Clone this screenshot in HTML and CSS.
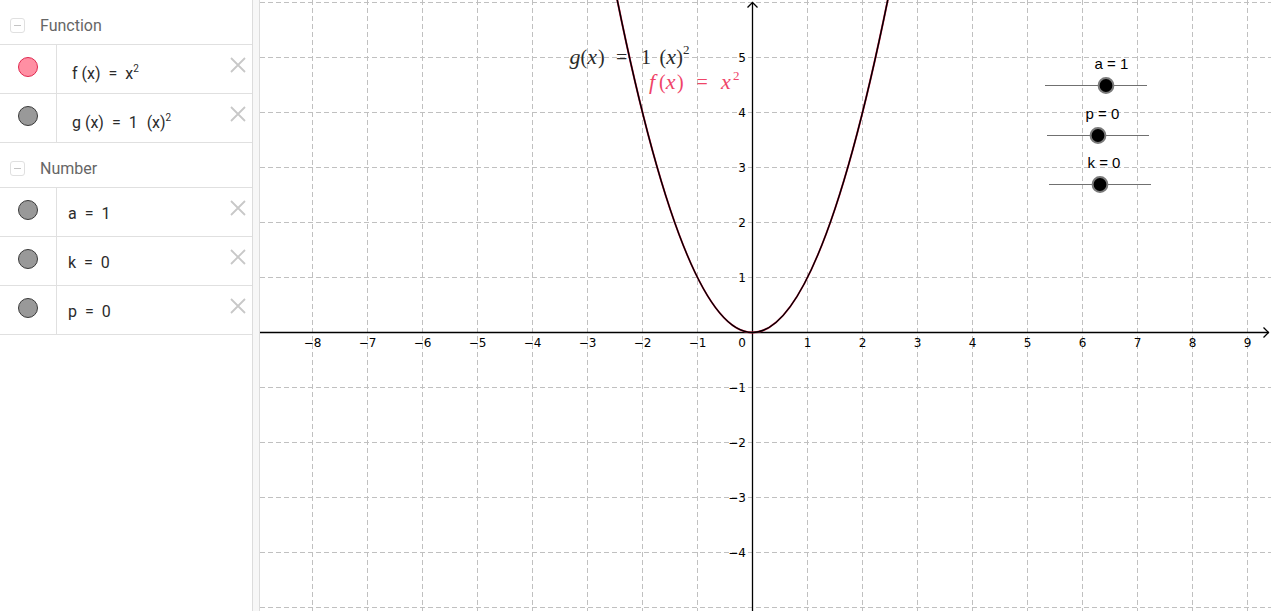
FILE: index.html
```html
<!DOCTYPE html>
<html>
<head>
<meta charset="utf-8">
<title>GeoGebra</title>
<link rel="stylesheet" href="styles.css">
</head>
<body>
<div class="app">
  <aside class="algebra">
    <div class="group-head">
      <span class="toggle"><span class="minus"></span></span>
      <span class="group-title">Function</span>
    </div>
    <div class="item">
      <div class="marble-cell"><span class="marble marble-f"></span></div>
      <div class="content fn">f (x) <span class="eq">=</span> x<sup>2</sup></div>
      <span class="close"><svg viewBox="0 0 16 16"><path d="M1 1L15 15M15 1L1 15"/></svg></span>
    </div>
    <div class="item">
      <div class="marble-cell"><span class="marble"></span></div>
      <div class="content fn">g (x) <span class="eq">=</span> 1 <span class="gap"></span>(x)<sup>2</sup></div>
      <span class="close"><svg viewBox="0 0 16 16"><path d="M1 1L15 15M15 1L1 15"/></svg></span>
    </div>
    <div class="group-head">
      <span class="toggle"><span class="minus"></span></span>
      <span class="group-title">Number</span>
    </div>
    <div class="item">
      <div class="marble-cell"><span class="marble"></span></div>
      <div class="content num">a <span class="eq">=</span> 1</div>
      <span class="close"><svg viewBox="0 0 16 16"><path d="M1 1L15 15M15 1L1 15"/></svg></span>
    </div>
    <div class="item">
      <div class="marble-cell"><span class="marble"></span></div>
      <div class="content num">k <span class="eq">=</span> 0</div>
      <span class="close"><svg viewBox="0 0 16 16"><path d="M1 1L15 15M15 1L1 15"/></svg></span>
    </div>
    <div class="item">
      <div class="marble-cell"><span class="marble"></span></div>
      <div class="content num">p <span class="eq">=</span> 0</div>
      <span class="close"><svg viewBox="0 0 16 16"><path d="M1 1L15 15M15 1L1 15"/></svg></span>
    </div>
  </aside>
  <div class="splitter"></div>
  <main class="graphics">
    <svg class="canvas" viewBox="260 0 1011 611" width="1011" height="611">
      <g class="grid">
        <line x1="312.5" y1="0" x2="312.5" y2="611"/>
        <line x1="367.5" y1="0" x2="367.5" y2="611"/>
        <line x1="422.5" y1="0" x2="422.5" y2="611"/>
        <line x1="477.5" y1="0" x2="477.5" y2="611"/>
        <line x1="532.5" y1="0" x2="532.5" y2="611"/>
        <line x1="587.5" y1="0" x2="587.5" y2="611"/>
        <line x1="642.5" y1="0" x2="642.5" y2="611"/>
        <line x1="697.5" y1="0" x2="697.5" y2="611"/>
        <line x1="807.5" y1="0" x2="807.5" y2="611"/>
        <line x1="862.5" y1="0" x2="862.5" y2="611"/>
        <line x1="917.5" y1="0" x2="917.5" y2="611"/>
        <line x1="972.5" y1="0" x2="972.5" y2="611"/>
        <line x1="1027.5" y1="0" x2="1027.5" y2="611"/>
        <line x1="1082.5" y1="0" x2="1082.5" y2="611"/>
        <line x1="1137.5" y1="0" x2="1137.5" y2="611"/>
        <line x1="1192.5" y1="0" x2="1192.5" y2="611"/>
        <line x1="1247.5" y1="0" x2="1247.5" y2="611"/>
        <line x1="260" y1="2.5" x2="1271" y2="2.5"/>
        <line x1="260" y1="57.5" x2="1271" y2="57.5"/>
        <line x1="260" y1="112.5" x2="1271" y2="112.5"/>
        <line x1="260" y1="167.5" x2="1271" y2="167.5"/>
        <line x1="260" y1="222.5" x2="1271" y2="222.5"/>
        <line x1="260" y1="277.5" x2="1271" y2="277.5"/>
        <line x1="260" y1="387.5" x2="1271" y2="387.5"/>
        <line x1="260" y1="442.5" x2="1271" y2="442.5"/>
        <line x1="260" y1="497.5" x2="1271" y2="497.5"/>
        <line x1="260" y1="552.5" x2="1271" y2="552.5"/>
        <line x1="260" y1="607.5" x2="1271" y2="607.5"/>
      </g>
      <g class="axes">
        <line x1="260" y1="332.5" x2="1269" y2="332.5"/>
        <polyline points="1263.5,327.5 1268.5,332.5 1263.5,337.5"/>
        <line x1="752.5" y1="2.5" x2="752.5" y2="611"/>
        <polyline points="747.5,7.5 752.5,2.5 757.5,7.5"/>
      </g>
      <g class="ax-labels xl">
        <text x="312.5" y="347">−8</text>
        <text x="367.5" y="347">−7</text>
        <text x="422.5" y="347">−6</text>
        <text x="477.5" y="347">−5</text>
        <text x="532.5" y="347">−4</text>
        <text x="587.5" y="347">−3</text>
        <text x="642.5" y="347">−2</text>
        <text x="697.5" y="347">−1</text>
        <text x="807.5" y="347">1</text>
        <text x="862.5" y="347">2</text>
        <text x="917.5" y="347">3</text>
        <text x="972.5" y="347">4</text>
        <text x="1027.5" y="347">5</text>
        <text x="1082.5" y="347">6</text>
        <text x="1137.5" y="347">7</text>
        <text x="1192.5" y="347">8</text>
        <text x="1247.5" y="347">9</text>
      </g>
      <g class="ax-labels yl">
        <text x="746" y="347">0</text>
        <text x="746" y="62">5</text>
        <text x="746" y="117">4</text>
        <text x="746" y="172">3</text>
        <text x="746" y="227">2</text>
        <text x="746" y="282">1</text>
        <text x="746" y="392">−1</text>
        <text x="746" y="447">−2</text>
        <text x="746" y="502">−3</text>
        <text x="746" y="557">−4</text>
      </g>
      <path class="curve-f" d="M617.2,-0.3 Q752.5,665.3 887.8,-0.3"/>
      <path class="curve-g" d="M617.2,-0.3 Q752.5,665.3 887.8,-0.3"/>
      <text class="math math-g" y="63.5"><tspan x="569.5" class="it">g</tspan><tspan x="580.5">(</tspan><tspan x="587.3" class="it">x</tspan><tspan x="598">)</tspan><tspan x="616">=</tspan><tspan x="641">1</tspan><tspan x="659.5">(</tspan><tspan x="666.3" class="it">x</tspan><tspan x="676.2">)</tspan><tspan x="683" y="53.5" class="sup">2</tspan></text>
      <text class="math math-f" y="88.5"><tspan x="649" class="it">f</tspan><tspan x="659">(</tspan><tspan x="665.8" class="it">x</tspan><tspan x="677">)</tspan><tspan x="696.5">=</tspan><tspan x="721" class="it">x</tspan><tspan x="733" y="80" class="sup">2</tspan></text>
      <g class="slider">
        <text x="1094.5" y="69.3">a = 1</text>
        <line x1="1045" y1="85.5" x2="1147" y2="85.5"/>
        <circle cx="1106" cy="85.5" r="7.4"/>
        <text x="1085.5" y="119.3">p = 0</text>
        <line x1="1047" y1="135.5" x2="1149" y2="135.5"/>
        <circle cx="1098" cy="135.5" r="7.4"/>
        <text x="1087.5" y="168.3">k = 0</text>
        <line x1="1049" y1="184.5" x2="1151" y2="184.5"/>
        <circle cx="1100" cy="184.5" r="7.4"/>
      </g>
    </svg>
  </main>
</div>
</body>
</html>
```

FILE: styles.css
```css
html, body {
  margin: 0;
  padding: 0;
  background: #fff;
  overflow: hidden;
}
body {
  font-family: Roboto, "Noto Sans", sans-serif;
}
.app {
  display: flex;
  width: 1271px;
  height: 611px;
}
.algebra {
  flex: none;
  width: 252px;
  border-right: 1px solid #dcdcdc;
  background: #fff;
}
.splitter {
  flex: none;
  width: 6px;
  background: #f7f7f7;
  border-right: 1px solid #dcdcdc;
}
.graphics {
  flex: 1;
  background: #fff;
}
.canvas {
  display: block;
}

/* algebra view */
.group-head {
  height: 44px;
  border-bottom: 1px solid #e0e0e0;
  display: flex;
  align-items: center;
}
.toggle {
  margin: 6px 0 0 10px;
  width: 15px;
  height: 15px;
  box-sizing: border-box;
  border: 1px solid #e0e0e0;
  border-radius: 3px;
  display: flex;
  align-items: center;
  justify-content: center;
}
.minus {
  width: 7px;
  height: 1px;
  background: #c4c4c4;
}
.group-title {
  margin: 6px 0 0 15px;
  font-size: 16px;
  color: #666;
}
.item {
  height: 48px;
  border-bottom: 1px solid #e0e0e0;
  display: flex;
  align-items: flex-start;
}
.marble-cell {
  flex: none;
  width: 56px;
  height: 48px;
  border-right: 1px solid #e0e0e0;
}
.marble {
  display: block;
  margin: 12px 0 0 18px;
  width: 20px;
  height: 20px;
  box-sizing: border-box;
  border-radius: 50%;
  background: #999;
  border: 1px solid #3a3a3a;
}
.marble-f {
  background: #ff8fa3;
  border-color: #e0284f;
}
.content {
  flex: 1;
  font-size: 16px;
  line-height: 20px;
  color: #2b2b2b;
  white-space: nowrap;
}
.content.fn {
  padding: 18.5px 0 0 15px;
}
.content.num {
  padding: 15.5px 0 0 11px;
}
.eq {
  margin: 0 4px;
}
.gap {
  display: inline-block;
  width: 5px;
}
.content sup {
  font-size: 10px;
  line-height: 0;
  vertical-align: 7px;
}
.close {
  flex: none;
  width: 16px;
  height: 16px;
  margin: 12px 6px 0 0;
}
.close svg {
  display: block;
  width: 16px;
  height: 16px;
  fill: none;
  stroke: #c8c8c8;
  stroke-width: 1.8;
}

/* graphics view */
.grid line {
  stroke: #c0c0c0;
  stroke-width: 1;
  stroke-dasharray: 5 3;
}
.axes line, .axes polyline {
  stroke: #000;
  stroke-width: 1.3;
  fill: none;
}
.ax-labels text {
  font-family: "DejaVu Sans", sans-serif;
  font-size: 12px;
  fill: #000;
}
.xl text {
  text-anchor: middle;
}
.yl text {
  text-anchor: end;
}
.curve-f {
  fill: none;
  stroke: #e8305a;
  stroke-width: 2;
}
.curve-g {
  fill: none;
  stroke: #000;
  stroke-width: 1.5;
}
.math {
  font-family: "Liberation Serif", serif;
  font-size: 20px;
}
.math .it {
  font-style: italic;
  font-size: 22px;
}
.math .sup {
  font-size: 13px;
}
.math-g {
  fill: #2a2a2a;
}
.math-f {
  fill: #ef4468;
}
.slider text {
  font-family: "Liberation Sans", Arial, sans-serif;
  font-size: 15px;
  fill: #000;
}
.slider line {
  stroke: #707070;
  stroke-width: 1;
}
.slider circle {
  fill: #000;
  stroke: #7a7a7a;
  stroke-width: 2;
}
```
